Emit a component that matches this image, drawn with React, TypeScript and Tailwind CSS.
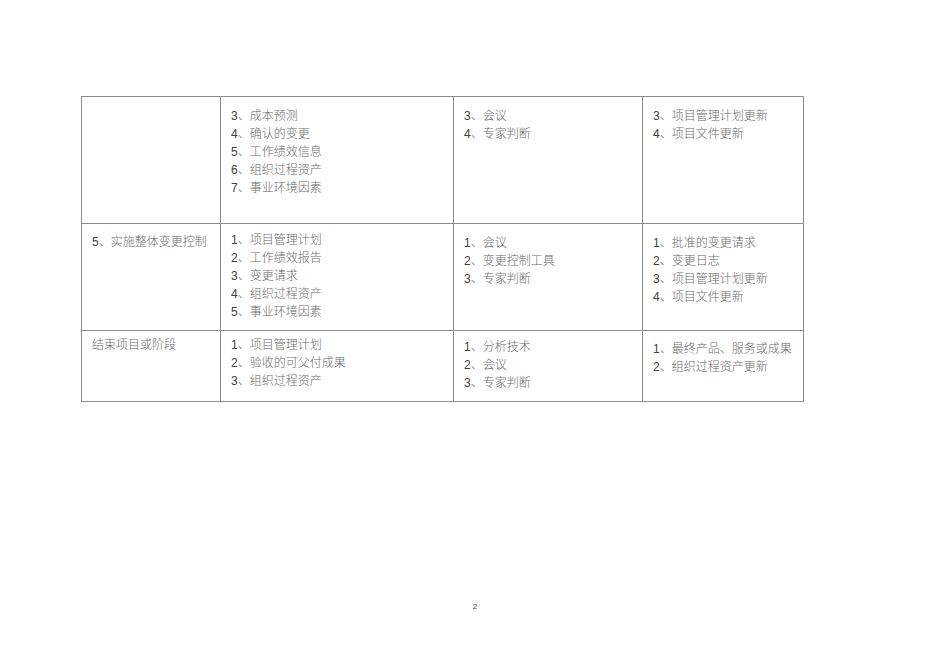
type Cell = {
  lines: string[];
  pt: string;
};

type Row = {
  height: string;
  cells: Cell[];
};

const rows: Row[] = [
  {
    height: "h-[127px]",
    cells: [
      { lines: [], pt: "pt-[10px]" },
      {
        lines: ["3、成本预测", "4、确认的变更", "5、工作绩效信息", "6、组织过程资产", "7、事业环境因素"],
        pt: "pt-[10px]",
      },
      { lines: ["3、会议", "4、专家判断"], pt: "pt-[10px]" },
      { lines: ["3、项目管理计划更新", "4、项目文件更新"], pt: "pt-[10px]" },
    ],
  },
  {
    height: "h-[107px]",
    cells: [
      { lines: ["5、实施整体变更控制"], pt: "pt-[9px]" },
      {
        lines: ["1、项目管理计划", "2、工作绩效报告", "3、变更请求", "4、组织过程资产", "5、事业环境因素"],
        pt: "pt-[7px]",
      },
      { lines: ["1、会议", "2、变更控制工具", "3、专家判断"], pt: "pt-[10px]" },
      {
        lines: ["1、批准的变更请求", "2、变更日志", "3、项目管理计划更新", "4、项目文件更新"],
        pt: "pt-[10px]",
      },
    ],
  },
  {
    height: "h-[71px]",
    cells: [
      { lines: ["结束项目或阶段"], pt: "pt-[5px]" },
      { lines: ["1、项目管理计划", "2、验收的可父付成果", "3、组织过程资产"], pt: "pt-[5px]" },
      { lines: ["1、分析技术", "2、会议", "3、专家判断"], pt: "pt-[7px]" },
      { lines: ["1、最终产品、服务或成果", "2、组织过程资产更新"], pt: "pt-[9px]" },
    ],
  },
];

function Line({ text }: { text: string }) {
  const m = text.match(/^(\d)(.*)$/);
  if (!m) return <div>{text}</div>;
  return (
    <div>
      <span className="text-[#404040]">{m[1]}</span>
      {m[2]}
    </div>
  );
}

export default function App() {
  return (
    <div
      className="w-[950px] h-[672px] bg-white flex flex-col text-[#6a6a6a]"
      style={{ fontFamily: '"Liberation Sans", "Noto Sans CJK SC", sans-serif' }}
    >
      <div className="pl-[81px] pt-[96px]">
        <table className="table-fixed border-collapse border border-[#8c8c8c] text-[12px] leading-[18px] font-light">
          <colgroup>
            <col className="w-[139px]" />
            <col className="w-[233px]" />
            <col className="w-[189px]" />
            <col className="w-[161px]" />
          </colgroup>
          <tbody>
            {rows.map((row, i) => (
              <tr key={i} className={row.height}>
                {row.cells.map((cell, j) => (
                  <td
                    key={j}
                    className={`border border-[#8c8c8c] align-top pl-[10px] pr-1 ${cell.pt}`}
                  >
                    {cell.lines.map((l) => (
                      <Line key={l} text={l} />
                    ))}
                  </td>
                ))}
              </tr>
            ))}
          </tbody>
        </table>
      </div>
      <div className="flex-1" />
      <div className="text-center text-[8px] leading-[10px] text-[#444] mb-[60px]">2</div>
    </div>
  );
}
